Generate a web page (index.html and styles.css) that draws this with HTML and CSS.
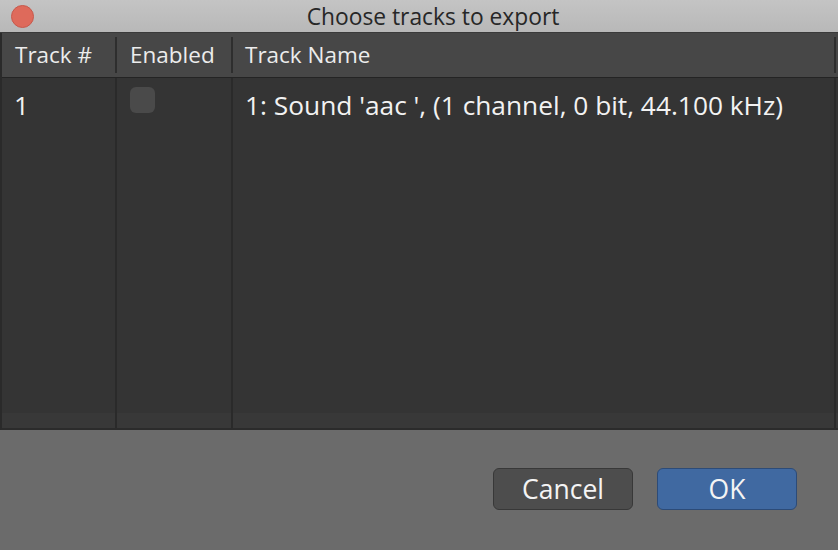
FILE: index.html
```html
<!DOCTYPE html>
<html>
<head>
<meta charset="utf-8">
<link rel="stylesheet" href="styles.css">
</head>
<body>
<div class="window">
  <div class="titlebar">
    <span class="close"></span>
    <span class="title">Choose tracks to export</span>
  </div>
  <div class="table">
    <div class="thead">
      <div class="th c1">Track #</div>
      <div class="hsep"></div>
      <div class="th c2">Enabled</div>
      <div class="hsep"></div>
      <div class="th c3">Track Name</div>
      <div class="hsep"></div>
    </div>
    <div class="tbody">
      <div class="col c1"><div class="cell">1</div></div>
      <div class="bsep"></div>
      <div class="col c2"><div class="cell"><span class="check"></span></div></div>
      <div class="bsep"></div>
      <div class="col c3"><div class="cell">1: Sound 'aac ', (1 channel, 0 bit, 44.100 kHz)</div></div>
      <div class="bsep"></div>
      <div class="col rest"></div>
    </div>
  </div>
  <div class="footer">
    <button class="btn cancel">Cancel</button>
    <button class="btn ok">OK</button>
  </div>
</div>
</body>
</html>
```
FILE: styles.css
```css
html, body {
  margin: 0;
  padding: 0;
  background: #6b6b6b;
}
.window {
  width: 838px;
  height: 550px;
  display: flex;
  flex-direction: column;
  font-family: "Open Sans", "Liberation Sans", Arial, sans-serif;
  overflow: hidden;
}
.titlebar {
  height: 32px;
  flex: 0 0 32px;
  box-sizing: content-box;
  padding-left: 28px;
  background: linear-gradient(#c4c4c4, #b8b8b8);
  border-bottom: 1px solid #3a3a3a;
  display: flex;
  align-items: center;
  justify-content: center;
  position: relative;
}
.close {
  position: absolute;
  left: 11px;
  top: 5px;
  width: 21px;
  height: 21px;
  border-radius: 50%;
  background: #de6a5b;
  border: 1px solid #c7594c;
}
.title {
  font-size: 22.8px;
  color: #272727;
}
.table {
  display: flex;
  flex-direction: column;
  border-left: 2px solid #2a2a2a;
  border-bottom: 2px solid #2b2b2b;
  height: 395px;
  flex: 0 0 auto;
}
.thead {
  height: 44px;
  flex: 0 0 44px;
  background: #474747;
  border-bottom: 1px solid #242424;
  display: flex;
  align-items: center;
}
.th {
  color: #ececec;
  font-size: 22.5px;
  padding-left: 13px;
  box-sizing: border-box;
  line-height: 44px;
  height: 44px;
}
.c1 { width: 113px; }
.c2 { width: 114px; }
.c3 { width: 601px; }
.c3.th { padding-left: 12px; }
.hsep {
  width: 2px;
  height: 36px;
  background: #2e2e2e;
}
.tbody {
  flex: 1;
  display: flex;
  background: linear-gradient(#343434 0, #343434 335px, #383838 335px);
}
.col {
  box-sizing: border-box;
}
.rest { flex: 1; }
.bsep {
  width: 2px;
  background: #2a2a2a;
}
.cell {
  color: #f2f2f2;
  font-size: 26.3px;
  padding-left: 12px;
  height: 54px;
  display: flex;
  align-items: center;
}
.c2 .cell {
  align-items: flex-start;
  padding-top: 9px;
  box-sizing: border-box;
}
.check {
  display: block;
  width: 25px;
  height: 26px;
  border-radius: 6px;
  background: #4a4a4a;
  margin-left: 1px;
}
.footer {
  flex: 1;
  background: #6b6b6b;
  display: flex;
  justify-content: flex-end;
  align-items: flex-start;
  padding: 38px 41px 0 0;
  gap: 24px;
}
.btn {
  width: 140px;
  height: 42px;
  border-radius: 6px;
  font-family: "Open Sans", "Liberation Sans", Arial, sans-serif;
  font-size: 26.5px;
  line-height: 1;
  color: #f4f4f4;
  padding: 0;
}
.cancel {
  background: #4d4d4d;
  border: 1px solid #383838;
}
.ok {
  background: #4069a1;
  border: 1px solid #2c4b78;
}
```
